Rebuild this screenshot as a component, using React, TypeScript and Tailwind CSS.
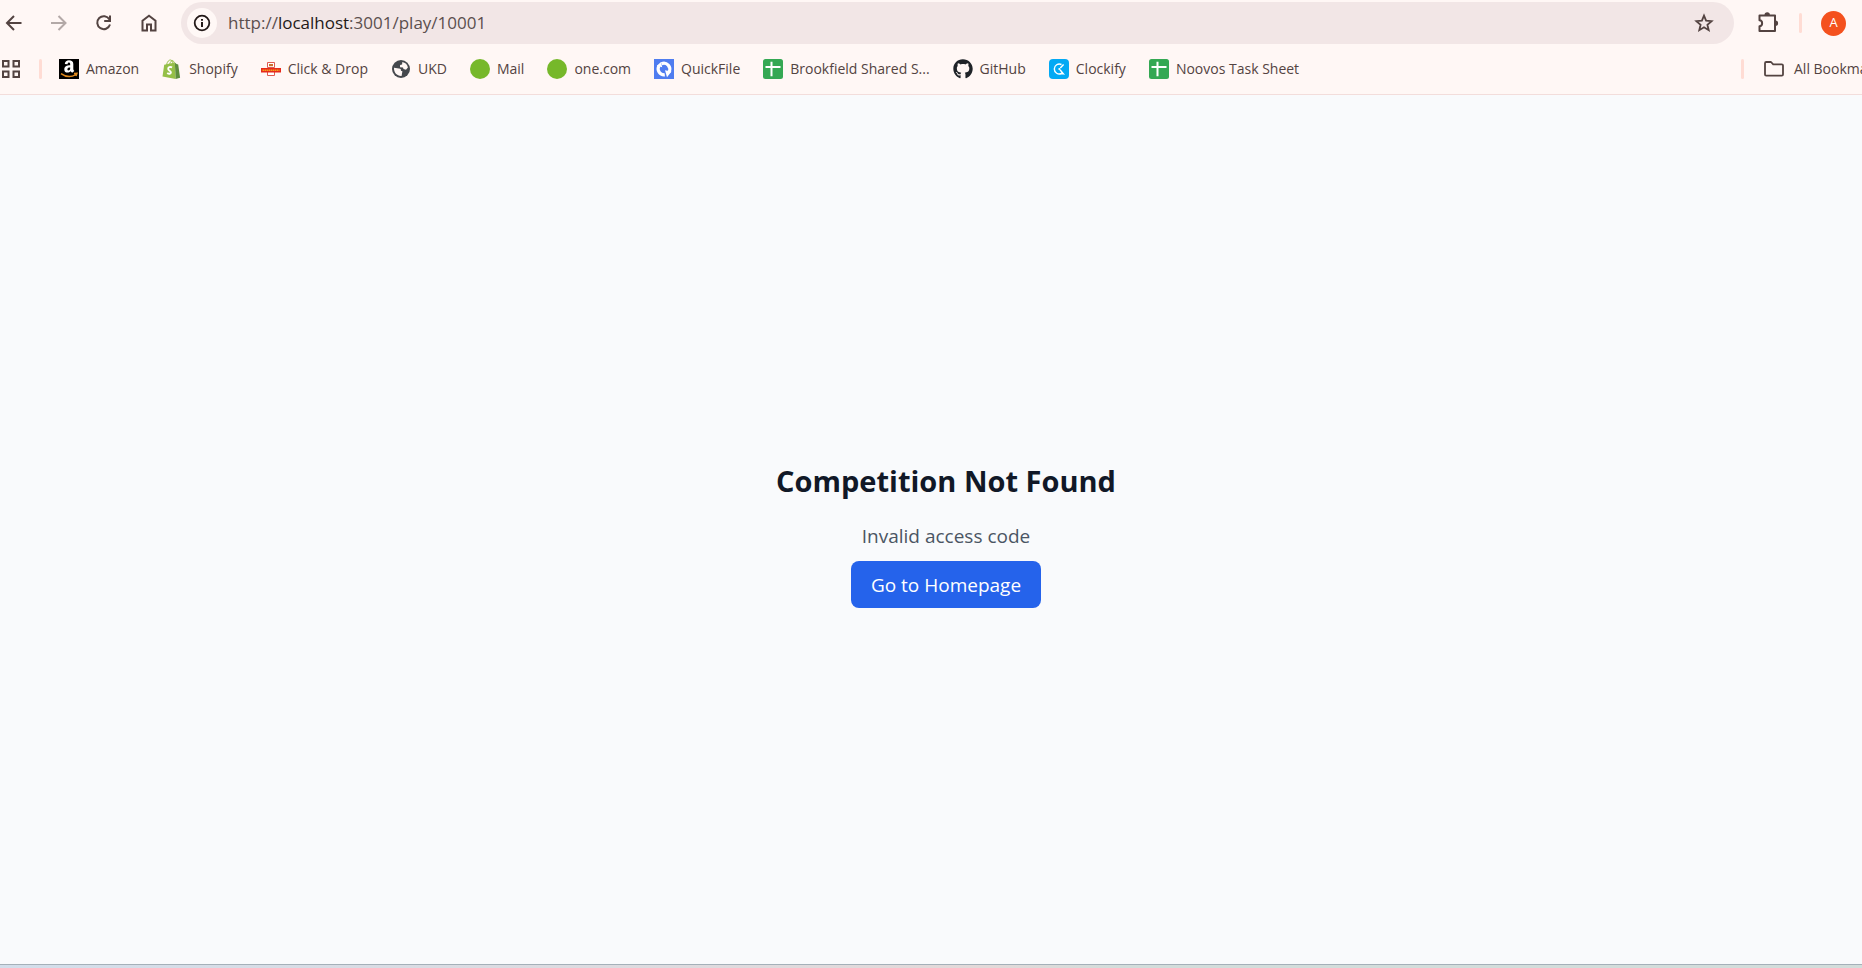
import type { ReactNode } from "react";
import { FaGithub } from "react-icons/fa";

const strokeProps = {
  fill: "none",
  stroke: "currentColor",
  strokeWidth: 2,
} as const;

function BackIcon() {
  return (
    <svg viewBox="0 0 24 24" className="size-6" {...strokeProps}>
      <path d="M19.500 12H6M12 5l-7 7 7 7" />
    </svg>
  );
}

function ForwardIcon() {
  return (
    <svg viewBox="0 0 24 24" className="size-6" {...strokeProps}>
      <path d="M4 12h13.500M11.500 5l7 7-7 7" />
    </svg>
  );
}

function ReloadIcon() {
  return (
    <svg viewBox="0 0 24 24" className="size-6" {...strokeProps}>
      <path d="M17.400 8.400A6.500 6.500 0 1 0 18 13.500" />
      <path d="M18 4.500v5.600h-5.800" />
    </svg>
  );
}

function HomeIcon() {
  return (
    <svg viewBox="0 0 24 24" className="size-6" {...strokeProps}>
      <path d="M5.500 19.500V9.700L12 4.800l6.500 4.900v9.800h-4.500v-6h-4v6z" />
    </svg>
  );
}

function InfoIcon() {
  return (
    <svg viewBox="0 0 18 18" className="size-[18px]" {...strokeProps}>
      <circle cx="9" cy="9" r="7.300" strokeWidth="1.800" />
      <path d="M9 8v5M9 5v1.800" />
    </svg>
  );
}

function StarIcon() {
  return (
    <svg viewBox="0 0 24 24" className="size-6" fill="none" stroke="currentColor" strokeWidth="1.800">
      <path d="M12 4.600l2.100 5.100 5.500.5-4.200 3.600 1.300 5.400L12 16.300l-4.700 2.900 1.300-5.400-4.200-3.600 5.500-.5z" />
    </svg>
  );
}

function PuzzleIcon() {
  return (
    <svg viewBox="0 0 24 24" className="size-6" fill="none" stroke="currentColor" strokeWidth="2" strokeLinejoin="round">
      <path d="M3.500 4.500h15.500v15.500H3.500v-4.800c3.500-.3 3.500-5.700 0-6z" />
      <path d="M8.500 4a2.700 2.700 0 0 1 5.400 0zM19.500 9.600a2.600 2.600 0 0 1 0 5.200z" fill="currentColor" stroke="none" />
    </svg>
  );
}

function AppsIcon() {
  return (
    <svg viewBox="0 0 18 18" className="size-[18px]" {...strokeProps}>
      <path d="M1 1h5.500v5.500H1zM11.500 1H17v5.500h-5.500zM1 11.500h5.500V17H1zM11.500 11.500H17V17h-5.500z" />
    </svg>
  );
}

function FolderIcon() {
  return (
    <svg viewBox="0 0 20 20" className="size-5" fill="none" stroke="currentColor" strokeWidth="1.800" strokeLinejoin="round">
      <path d="M1 4.200q0-1.200 1.200-1.200H7l2.200 2.300h8.600q1.200 0 1.200 1.200v9q0 1.200-1.200 1.200H2.200Q1 16.700 1 15.500z" />
    </svg>
  );
}

function AmazonLogo() {
  return (
    <span className="flex size-5 items-center justify-center bg-black">
      <svg viewBox="0 0 20 20" className="size-5">
        <path
          d="M5.800 4.900C6 2.500 7.800 1.200 10 1.200c2.700 0 4.300 1.200 4.300 3.800v4.700c0 1 .4 1.400 1 2.200l-2.100 1.900c-.8-.6-1.200-1-1.500-1.600-2.200 2.300-6.400 1.700-6.400-1.800 0-3 2.400-4 5.900-4.100 0-1.700 0-2.700-1.200-2.700-.8 0-1.300.5-1.500 1.600zm5.400 3.500c-1.600 0-2.800.4-2.800 1.800 0 1.900 2.800 1.500 2.800-1z"
          fill="#fff"
        />
        <path d="M2 14.600c5 3.600 10.500 3.600 14.800 1M15 14.600l2.900-.2-.9 2.500" fill="none" stroke="#e08a1e" strokeWidth="1.500" />
      </svg>
    </span>
  );
}

function ShopifyLogo() {
  return (
    <svg viewBox="0 0 20 20" className="size-5">
      <path d="M2.200 5.700l10.600-2.100.9 16.400L.5 17.600z" fill="#95bf47" />
      <path d="M12.800 3.600l1.800 1.500 1.600.3 1.900 13.300-4.400 1.300z" fill="#5e8e3e" />
      <path d="M4.500 5.800C5.300 2.500 7 .8 8.700 1c1.500.2 2 2 2.100 3.500M7.700 5c.7-2.400 2-3.800 3.200-3.300.8.3 1.200 1.300 1.500 2.200" fill="none" stroke="#95bf47" />
      <path d="M10.100 8.300C8 7.500 6.100 8.300 6.200 10c.1 1.700 2.800 1.800 2.700 3.500-.1 1.500-2 1.700-3.700.5" fill="none" stroke="#fff" strokeWidth="1.900" />
    </svg>
  );
}

function RoyalMailLogo() {
  return (
    <svg viewBox="0 0 20 20" className="size-5">
      <path d="M6.500 3.500h7v5h-7zM6.500 12.500h7v4h-7z" fill="#fff" stroke="#df5a50" />
      <path d="M8 5h4v2.200H8z" fill="#c9712f" />
      <path d="M0 9h20v4.500H0z" fill="#e6291b" />
      <path d="M1.500 11.200h17" stroke="#f6a11c" strokeWidth="1.500" strokeDasharray="1.500 .5" />
    </svg>
  );
}

function GlobeLogo() {
  return (
    <svg viewBox="0 0 20 20" className="size-5">
      <circle cx="10" cy="10" r="9" fill="#45484d" />
      <path
        d="M3 8.800l5 .7c1.900.3 2.200 1.100 1.900 2.300l1.500.4-.8 4.700c-4.300.3-7.900-3-7.600-8.100zM11.300 3c3 .5 5.200 2.600 5.600 5.400l-1.900 2.300-2.500-.8-.5-1.300-3-.3.100-2.400 2-.4z"
        fill="#fff7f5"
      />
    </svg>
  );
}

function GreenDot() {
  return <span className="block size-5 rounded-full bg-[#76b82a]" />;
}

function QuickFileLogo() {
  return (
    <svg viewBox="0 0 20 20" className="size-5">
      <path d="M0 0h20v20H0z" fill="#4f7df0" />
      <path d="M10.800 15.800A6 6 0 0 1 5 6.800M7.500 4.700a6 6 0 0 1 7.600 8.300" fill="none" stroke="#fff" strokeWidth="3.200" />
      <path d="M2.800 6.800L7 3l1.200 5.200zM11 11.200l6.500 1.400L13 18.200z" fill="#fff" />
    </svg>
  );
}

function SheetLogo() {
  return (
    <svg viewBox="0 0 20 20" className="size-5">
      <rect width="20" height="20" rx="2.500" fill="#34a853" />
      <path d="M8.500 2.800v14.400M2.500 8h15" stroke="#fff" strokeWidth="2" />
    </svg>
  );
}

function ClockifyLogo() {
  return (
    <svg viewBox="0 0 20 20" className="size-5">
      <rect width="20" height="20" rx="4" fill="#03a9f4" />
      <path d="M12.500 5.500a5 5 0 1 0 0 9l1.800.3-3.300-4.100M14.600 5.500L11.300 9" fill="none" stroke="#fff" strokeWidth="1.400" />
      <circle cx="10.300" cy="10" r="1" fill="#fff" />
    </svg>
  );
}

function Divider() {
  return <span className="block h-5 w-[3px] shrink-0 rounded-full bg-[#ffdcd4]" />;
}

const bookmarks: { label: string; icon: ReactNode }[] = [
  { label: "Amazon", icon: <AmazonLogo /> },
  { label: "Shopify", icon: <ShopifyLogo /> },
  { label: "Click & Drop", icon: <RoyalMailLogo /> },
  { label: "UKD", icon: <GlobeLogo /> },
  { label: "Mail", icon: <GreenDot /> },
  { label: "one.com", icon: <GreenDot /> },
  { label: "QuickFile", icon: <QuickFileLogo /> },
  { label: "Brookfield Shared S...", icon: <SheetLogo /> },
  { label: "GitHub", icon: <FaGithub className="size-5 text-[#1f2328]" /> },
  { label: "Clockify", icon: <ClockifyLogo /> },
  { label: "Noovos Task Sheet", icon: <SheetLogo /> },
];

function Toolbar() {
  return (
    <div className="flex items-center pt-0.5 pr-4 pl-0.5 text-[#534341]">
      <nav aria-label="Navigation" className="flex items-center gap-[21px]">
        <button aria-label="Back"><BackIcon /></button>
        <button aria-label="Forward" className="text-[#b3a9a7]"><ForwardIcon /></button>
        <button aria-label="Reload"><ReloadIcon /></button>
        <button aria-label="Home"><HomeIcon /></button>
      </nav>
      <div className="ml-5 flex h-[42px] flex-1 items-center rounded-full bg-[#f2e6e6] pr-[18px] pl-1.5">
        <button aria-label="Site information" className="flex size-[30px] items-center justify-center rounded-full bg-[#fff8f6] text-[#231918]">
          <InfoIcon />
        </button>
        <div className="relative ml-[11px] flex-1 text-[17px] leading-6 text-[#5b4f4e]">
          <div aria-hidden="true" className="pointer-events-none absolute inset-0">
            http://<span className="text-[#231918]">localhost</span>:3001/play/10001
          </div>
          <input
            aria-label="Address"
            defaultValue="http://localhost:3001/play/10001"
            className="block w-full bg-transparent text-transparent outline-none"
          />
        </div>
        <button aria-label="Bookmark this page"><StarIcon /></button>
      </div>
      <div className="ml-[22px] flex items-center gap-[19px]">
        <button aria-label="Extensions"><PuzzleIcon /></button>
        <Divider />
        <button aria-label="Profile" className="flex size-[25px] items-center justify-center rounded-full bg-[#f4511e] text-[13px] text-white">
          A
        </button>
      </div>
    </div>
  );
}

function BookmarksBar() {
  return (
    <div className="flex h-[51px] items-center overflow-hidden border-b border-[#f3dddb] pl-0.5 text-[14px] leading-5 whitespace-nowrap text-[#534341]">
      <button aria-label="Apps"><AppsIcon /></button>
      <div className="ml-[19px]"><Divider /></div>
      <nav aria-label="Bookmarks" className="ml-[17px] flex flex-1 items-center gap-[23px]">
        {bookmarks.map(({ label, icon }) => (
          <a key={label} href="#" className="flex items-center gap-[7px]">
            {icon}
            {label}
          </a>
        ))}
      </nav>
      <Divider />
      <button className="ml-5 flex w-[98px] items-center gap-[10px]">
        <span className="shrink-0"><FolderIcon /></span>
        All Bookmarks
      </button>
    </div>
  );
}

export default function App() {
  return (
    <div className="flex h-screen flex-col overflow-hidden bg-[#f9fafc] font-['Open_Sans','Noto_Sans',sans-serif]">
      <header className="bg-[#fff7f5]">
        <Toolbar />
        <BookmarksBar />
      </header>
      <main className="flex flex-1 flex-col items-center justify-center pt-2.5 pl-[30px]">
        <h1 className="text-[29px] leading-10 font-bold text-[#111827]">Competition Not Found</h1>
        <p className="mt-5 text-[19px] leading-[30px] text-[#4b5563]">Invalid access code</p>
        <button className="mt-2.5 h-[47px] rounded-lg bg-[#2563eb] px-5 pt-0.5 text-[19px] text-white">Go to Homepage</button>
      </main>
      <footer className="h-1 border-t border-[#a5b0b9] bg-linear-to-r from-[#d3deeb] via-[#e3d9d9] via-53% to-[#d3dddb] to-60%" />
    </div>
  );
}
